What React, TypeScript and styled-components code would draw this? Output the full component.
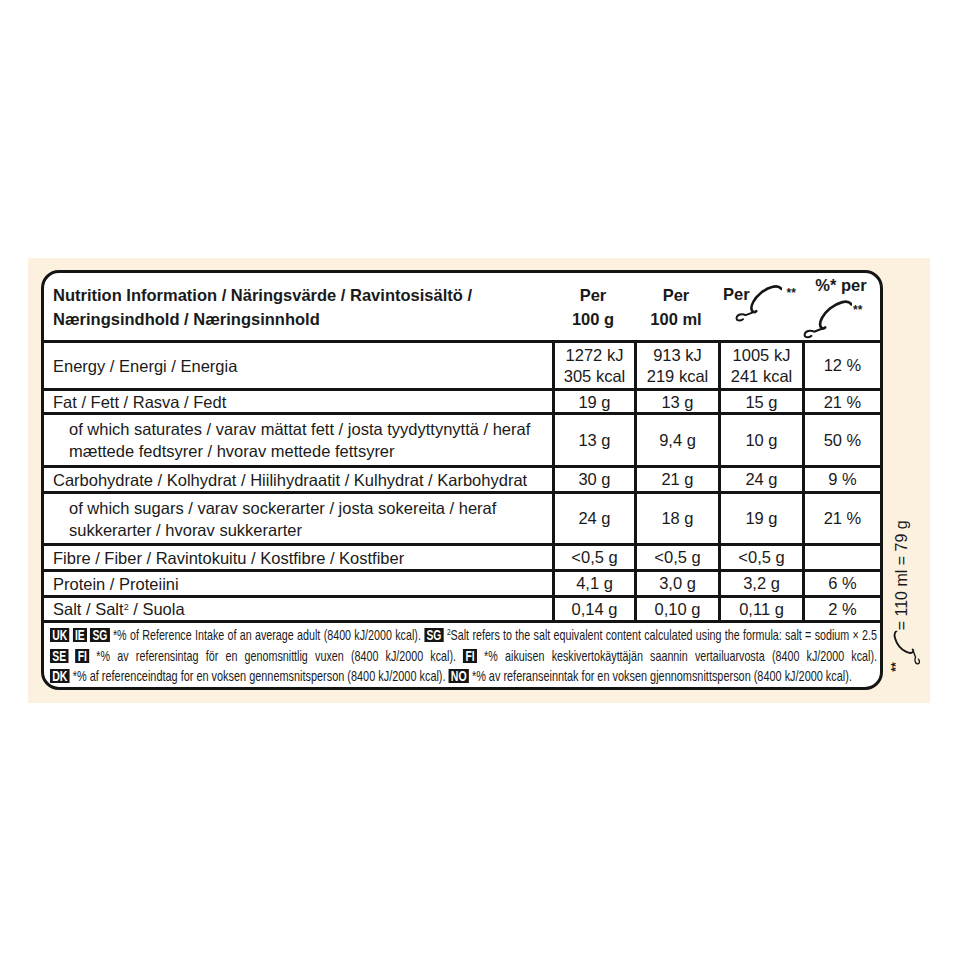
import styled, { createGlobalStyle } from "styled-components";

const GlobalStyle = createGlobalStyle`
  body {
    margin: 0;
    background: #ffffff;
    color: #1a1a1a;
    font-family: "Liberation Sans", Arial, sans-serif;
  }
`;

const Page = styled.div`
  padding: 258px 30px 0 28px;
`;

const Panel = styled.div`
  display: flex;
  width: 902px;
  height: 445px;
  box-sizing: border-box;
  padding: 12px 0 13px 13px;
  background: #fcf1de;
`;

const Table = styled.div`
  width: 842px;
  height: 420px;
  flex-shrink: 0;
  box-sizing: border-box;
  border: 3px solid #141414;
  border-radius: 18px;
  background: #fff;
  overflow: hidden;
  display: flex;
  flex-direction: column;
`;

const Row = styled.div<{ $h: number; $top?: boolean }>`
  display: grid;
  grid-template-columns: 508px 82px 84px 84px 78px;
  height: ${(p) => p.$h}px;
  box-sizing: border-box;
  border-top: ${(p) => (p.$top ? "3px solid #141414" : "none")};
  font-size: 16.5px;
  line-height: 22px;
`;

const Label = styled.div<{ $indent?: boolean }>`
  display: flex;
  align-items: center;
  padding-left: ${(p) => (p.$indent ? 25 : 9)}px;
`;

const HeadLabel = styled(Label)`
  font-weight: bold;
  font-size: 16.5px;
  line-height: 24px;
`;

const Value = styled.div`
  display: flex;
  align-items: center;
  justify-content: center;
  text-align: center;
  border-left: 3px solid #141414;
  line-height: 21px;
`;

const HeadCell = styled.div`
  display: flex;
  align-items: center;
  justify-content: center;
  text-align: center;
  font-weight: bold;
  font-size: 16.5px;
  line-height: 24px;
`;

const HeadIconCell = styled.div`
  display: flex;
  align-items: flex-start;
  padding: 9px 0 0 5px;
  font-weight: bold;
  font-size: 16.5px;
  line-height: 24px;
`;

const HeadStackCell = styled.div`
  display: flex;
  flex-direction: column;
  align-items: center;
  font-weight: bold;
  font-size: 16.5px;
  line-height: 24px;
`;

const IconRow = styled.div`
  display: flex;
  align-items: flex-start;
  align-self: flex-start;
  margin-top: 2px;
`;

const Stars = styled.span<{ $mt: number; $ml: number }>`
  font-size: 12px;
  line-height: 12px;
  font-weight: bold;
  margin-top: ${(p) => p.$mt}px;
  margin-left: ${(p) => p.$ml}px;
`;

const Sup = styled.sup`
  font-size: 9px;
  line-height: 0;
  vertical-align: 0;
  position: relative;
  top: -0.6em;
`;

const ConeSvg = styled.svg<{ $ml?: number; $mt?: number }>`
  flex-shrink: 0;
  display: block;
  margin-left: ${(p) => p.$ml ?? 0}px;
  margin-top: ${(p) => p.$mt ?? 0}px;
`;

const Footer = styled.div`
  flex: 1;
  border-top: 3px solid #141414;
  padding: 2px 3px 0 6px;
  overflow: hidden;
`;

const FootLine = styled.div<{ $justify?: boolean; $scale: number }>`
  width: calc(827px / ${(p) => p.$scale});
  height: 20.5px;
  line-height: 20.5px;
  font-size: 14.5px;
  white-space: nowrap;
  text-align: left;
  text-align-last: ${(p) => (p.$justify ? "justify" : "left")};
  transform: scaleX(${(p) => p.$scale});
  transform-origin: left center;
`;

const Badge = styled.span`
  display: inline-block;
  background: #151515;
  color: #fff;
  font-weight: bold;
  font-size: 14px;
  line-height: 14px;
  padding: 0 3px;
`;

const Side = styled.div`
  width: 47px;
  display: flex;
  flex-direction: column;
  justify-content: flex-end;
  align-items: center;
`;

const SideSlot = styled.div`
  width: 28px;
  height: 158px;
  margin-bottom: 15px;
  display: flex;
  align-items: center;
  justify-content: center;
`;

const SideText = styled.div`
  display: flex;
  align-items: flex-start;
  white-space: nowrap;
  font-size: 16px;
  line-height: 18px;
  transform: rotate(-90deg);
`;

function Cone({ w, h, ml, mt }: { w: number; h: number; ml?: number; mt?: number }) {
  return (
    <ConeSvg width={w} height={h} viewBox="0 0 48 38" $ml={ml} $mt={mt}>
      <path
        d="M47.5 5 C45.5 2.2, 42 1.8, 38 3 C30 5.2, 22.5 11.5, 19.2 18 C17.2 22, 17 26, 18.8 27.6 C19.8 28.4, 21 28.2, 22.2 27.2"
        fill="none"
        stroke="#161616"
        strokeWidth="2.6"
        strokeLinecap="round"
      />
      <path
        d="M18.4 28.6 L11.6 31.2 C8 29.2, 3.2 30.6, 2.6 33.6 C2 36.6, 6 37.6, 9 35.2"
        fill="none"
        stroke="#161616"
        strokeWidth="1.9"
        strokeLinecap="round"
        strokeLinejoin="round"
      />
    </ConeSvg>
  );
}

type Item = {
  label: React.ReactNode;
  indent?: boolean;
  values: React.ReactNode[];
  h: number;
};

const items: Item[] = [
  {
    label: "Energy / Energi / Energia",
    values: [
      <>1272 kJ<br />305 kcal</>,
      <>913 kJ<br />219 kcal</>,
      <>1005 kJ<br />241 kcal</>,
      "12 %",
    ],
    h: 48,
  },
  { label: "Fat / Fett / Rasva / Fedt", values: ["19 g", "13 g", "15 g", "21 %"], h: 24 },
  {
    label: (
      <>of which saturates / varav mättat fett / josta tyydyttynyttä / heraf<br />mættede fedtsyrer / hvorav mettede fettsyrer</>
    ),
    indent: true,
    values: ["13 g", "9,4 g", "10 g", "50 %"],
    h: 53,
  },
  {
    label: "Carbohydrate / Kolhydrat / Hiilihydraatit / Kulhydrat / Karbohydrat",
    values: ["30 g", "21 g", "24 g", "9 %"],
    h: 26,
  },
  {
    label: (
      <>of which sugars / varav sockerarter / josta sokereita / heraf<br />sukkerarter / hvorav sukkerarter</>
    ),
    indent: true,
    values: ["24 g", "18 g", "19 g", "21 %"],
    h: 52,
  },
  {
    label: "Fibre / Fiber / Ravintokuitu / Kostfibre / Kostfiber",
    values: ["<0,5 g", "<0,5 g", "<0,5 g", ""],
    h: 26,
  },
  { label: "Protein / Proteiini", values: ["4,1 g", "3,0 g", "3,2 g", "6 %"], h: 26 },
  {
    label: <>Salt / Salt<Sup>2</Sup> / Suola</>,
    values: ["0,14 g", "0,10 g", "0,11 g", "2 %"],
    h: 25,
  },
];

export default function App() {
  return (
    <>
      <GlobalStyle />
      <Page>
        <Panel>
          <Table>
            <Row $h={67}>
              <HeadLabel>
                <span>
                  Nutrition Information / Näringsvärde / Ravintosisältö /<br />
                  Næringsindhold / Næringsinnhold
                </span>
              </HeadLabel>
              <HeadCell>Per<br />100 g</HeadCell>
              <HeadCell>Per<br />100 ml</HeadCell>
              <HeadIconCell>
                <span>Per</span>
                <Cone w={48} h={38} ml={-16} mt={2} />
                <Stars $mt={5} $ml={5}>**</Stars>
              </HeadIconCell>
              <HeadStackCell>
                <span>%* per</span>
                <IconRow>
                  <Cone w={50} h={40} />
                  <Stars $mt={5} $ml={1}>**</Stars>
                </IconRow>
              </HeadStackCell>
            </Row>
            {items.map((it, i) => (
              <Row key={i} $h={it.h} $top>
                <Label $indent={it.indent}>
                  <span>{it.label}</span>
                </Label>
                {it.values.map((v, j) => (
                  <Value key={j}>
                    <span>{v}</span>
                  </Value>
                ))}
              </Row>
            ))}
            <Footer>
              <FootLine $justify $scale={0.74}>
                <Badge>UK</Badge> <Badge>IE</Badge> <Badge>SG</Badge> *% of Reference Intake of an average adult
                (8400 kJ/2000 kcal). <Badge>SG</Badge> <Sup>2</Sup>Salt refers to the salt equivalent content
                calculated using the formula: salt = sodium × 2.5
              </FootLine>
              <FootLine $justify $scale={0.74}>
                <Badge>SE</Badge> <Badge>FI</Badge> *% av referensintag för en genomsnittlig vuxen (8400 kJ/2000
                kcal). <Badge>FI</Badge> *% aikuisen keskivertokäyttäjän saannin vertailuarvosta (8400 kJ/2000
                kcal).
              </FootLine>
              <FootLine $scale={0.752}>
                <Badge>DK</Badge> *% af referenceindtag for en voksen gennemsnitsperson (8400 kJ/2000 kcal).{" "}
                <Badge>NO</Badge> *% av referanseinntak for en voksen gjennomsnittsperson (8400 kJ/2000 kcal).
              </FootLine>
            </Footer>
          </Table>
          <Side>
            <SideSlot>
              <SideText>
                <Stars $mt={-3} $ml={0}>**</Stars>
                <Cone w={35} h={28} ml={-3} />
                <span>= 110 ml = 79 g</span>
              </SideText>
            </SideSlot>
          </Side>
        </Panel>
      </Page>
    </>
  );
}
